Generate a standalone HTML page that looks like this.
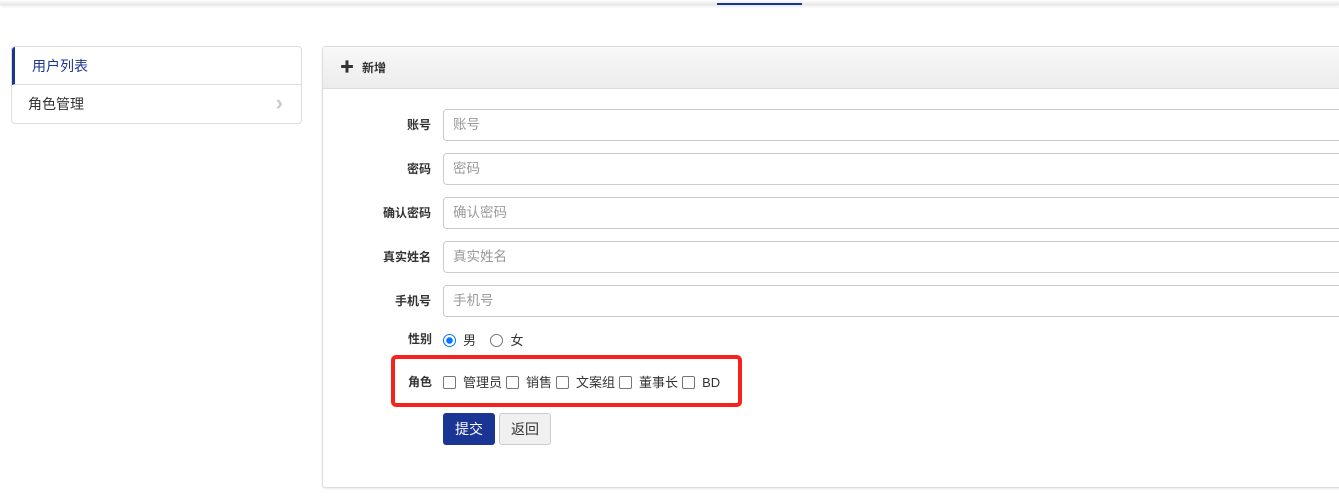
<!DOCTYPE html>
<html><head><meta charset="utf-8"><style>
*{box-sizing:border-box;margin:0;padding:0}
body{width:1339px;height:502px;overflow:hidden;background:#fff;font-family:"Liberation Sans","Noto Sans CJK SC",sans-serif;font-size:13px;color:#333;position:relative}
.top{position:absolute;left:0;top:0;width:1339px;height:5px;background:linear-gradient(#fff,#e6e6e6);box-shadow:0 1px 3px rgba(0,0,0,.12)}
.topline{position:absolute;left:717px;top:3px;width:85px;height:2px;background:#1a3593}
.side{position:absolute;left:11px;top:46px;width:291px;height:78px;border:1px solid #ddd;border-radius:4px;overflow:hidden}
.side div{height:38px;line-height:38px;font-size:14px;padding-left:16px;position:relative}
.side .a{border-left:3px solid #1a3593;color:#1a3593;padding-left:17px;border-bottom:1px solid #ddd}
.side .arr{position:absolute;right:18px;top:-1px;color:#ccc;font-size:22px;font-weight:bold}
.panel{position:absolute;left:322px;top:46px;width:1030px;height:442px;border:1px solid #ddd;border-radius:3px;box-shadow:0 1px 2px rgba(0,0,0,.08)}
.ph{height:42px;background:linear-gradient(#f8f8f8,#ececec);border-bottom:1px solid #ddd;line-height:41px;padding-left:17px;font-weight:bold;font-size:12px;color:#333}
.ph b{font-size:14px;margin-right:8px;vertical-align:0}
.row{position:absolute;left:0;width:1100px;height:32px}
.lbl{position:absolute;right:992px;width:100px;text-align:right;font-weight:bold;font-size:12px;line-height:32px;color:#333}
.inp{position:absolute;left:120px;top:0;width:980px;height:32px;border:1px solid #ccc;border-radius:4px;padding-left:9px;line-height:30px;color:#999;font-size:13.5px}
.rd{display:inline-block;width:13px;height:13px;border:1px solid #767676;border-radius:50%;vertical-align:-2px;margin-right:7px}
.rd.on{border:1px solid #0075ff;background:radial-gradient(#0075ff 3px,#fff 3.5px)}
.cb{display:inline-block;width:13px;height:13px;border:1px solid #767676;border-radius:2px;vertical-align:-2px;margin-right:7px}
.red{position:absolute;left:391px;top:355px;width:351px;height:52px;border:4px solid #f5231b;border-radius:5px}
.btn1{position:absolute;left:443px;top:413px;width:52px;height:32px;background:#1a3593;border-radius:3px;color:#fff;text-align:center;line-height:32px;font-size:14px}
.btn2{position:absolute;left:499px;top:413px;width:52px;height:32px;background:#f0f0f0;border:1px solid #ccc;border-radius:3px;color:#333;text-align:center;line-height:30px;font-size:14px}
</style></head><body>
<div class="top"></div><div class="topline"></div>
<div class="side"><div class="a">用户列表</div><div>角色管理<span class="arr">›</span></div></div>
<div class="panel"><div class="ph"><b>✚</b>新增</div></div>
<div class="row" style="left:323px;top:109px"><div class="lbl">账号</div><div class="inp">账号</div></div>
<div class="row" style="left:323px;top:153px"><div class="lbl">密码</div><div class="inp">密码</div></div>
<div class="row" style="left:323px;top:197px"><div class="lbl">确认密码</div><div class="inp">确认密码</div></div>
<div class="row" style="left:323px;top:241px"><div class="lbl">真实姓名</div><div class="inp">真实姓名</div></div>
<div class="row" style="left:323px;top:285px"><div class="lbl">手机号</div><div class="inp">手机号</div></div>
<div style="position:absolute;left:408px;top:330px;font-weight:bold;font-size:12px">性别</div>
<div style="position:absolute;left:443px;top:330px;font-size:13px"><span class="rd on"></span>男 &nbsp;&nbsp;&nbsp;<span class="rd"></span>女</div>
<div class="red"></div>
<div style="position:absolute;left:408px;top:373px;font-weight:bold;font-size:12px">角色</div>
<div style="position:absolute;left:443px;top:372px;font-size:13px;white-space:nowrap"><span class="cb"></span>管理员<span class="cb" style="margin-left:4px"></span>销售<span class="cb" style="margin-left:4px"></span>文案组<span class="cb" style="margin-left:4px"></span>董事长<span class="cb" style="margin-left:4px"></span>BD</div>
<div class="btn1">提交</div><div class="btn2">返回</div>
</body></html>
